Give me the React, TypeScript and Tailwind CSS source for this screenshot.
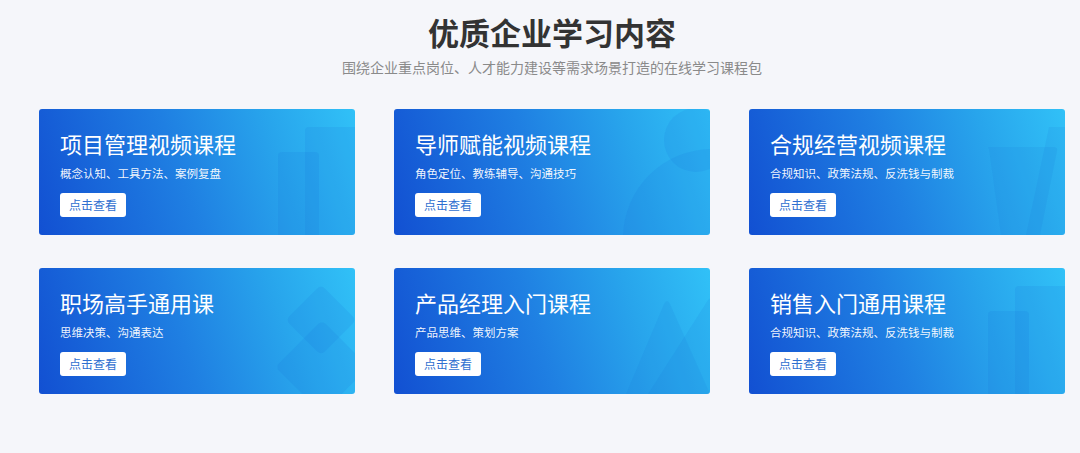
import React from "react";

type Course = {
  title: string;
  desc: string;
  deco: "bars" | "circles" | "slant" | "diamonds" | "peaks";
};

const courses: Course[] = [
  { title: "项目管理视频课程", desc: "概念认知、工具方法、案例复盘", deco: "bars" },
  { title: "导师赋能视频课程", desc: "角色定位、教练辅导、沟通技巧", deco: "circles" },
  { title: "合规经营视频课程", desc: "合规知识、政策法规、反洗钱与制裁", deco: "slant" },
  { title: "职场高手通用课", desc: "思维决策、沟通表达", deco: "diamonds" },
  { title: "产品经理入门课程", desc: "产品思维、策划方案", deco: "peaks" },
  { title: "销售入门通用课程", desc: "合规知识、政策法规、反洗钱与制裁", deco: "bars" },
];

const SHAPE = "#1670d8";

function Deco({ kind }: { kind: Course["deco"] }) {
  return (
    <svg
      className="pointer-events-none absolute inset-0 h-full w-full"
      viewBox="0 0 316 126"
      preserveAspectRatio="none"
    >
      {kind === "bars" && (
        <g fill={SHAPE} fillOpacity="0.13">
          <rect x="266" y="18" width="70" height="130" rx="4" />
          <rect x="239" y="43" width="41" height="100" rx="4" />
        </g>
      )}
      {kind === "circles" && (
        <g fill={SHAPE} fillOpacity="0.13">
          <circle cx="302" cy="31" r="32" />
          <circle cx="318" cy="129" r="89" />
        </g>
      )}
      {kind === "slant" && (
        <g fill={SHAPE} fillOpacity="0.12">
          <path d="M300 18 L330 18 L330 126 L277 126 Z" />
          <path d="M240 40 Q237 38 242 38 L305 38 Q309 38 308 42 L291 126 L252 126 Z" />
        </g>
      )}
      {kind === "diamonds" && (
        <g fill={SHAPE} fillOpacity="0.13">
          <rect x="257" y="27" width="50" height="50" rx="5" transform="rotate(45 282 52)" />
          <rect x="250" y="66" width="66" height="66" rx="5" transform="rotate(45 283 99)" />
        </g>
      )}
      {kind === "peaks" && (
        <g fill={SHAPE} fillOpacity="0.12">
          <path d="M232 126 L270 36 Q273 30 276 36 L316 126 Z" />
          <path d="M254 126 L314 32 Q318 28 320 34 L320 126 Z" />
        </g>
      )}
    </svg>
  );
}

function CourseCard({ course }: { course: Course }) {
  return (
    <div className="relative h-[126px] overflow-hidden rounded-[3px] bg-[linear-gradient(72deg,#1250d2_0%,#1f7fe2_45%,#28a5ec_75%,#31c1f7_100%)] pl-[21px] pt-[20px]">
      <Deco kind={course.deco} />
      <div className="relative">
        <h3 className="text-[22px] leading-[28px] font-normal text-white">
          {course.title}
        </h3>
        <p className="mt-[8px] text-[11.5px] leading-[16px] text-white/95">
          {course.desc}
        </p>
        <button className="mt-[12px] flex h-[24px] w-[66px] items-center justify-center rounded-[3px] bg-white text-[12px] text-[#2f6fd0]">
          点击查看
        </button>
      </div>
    </div>
  );
}

export default function App() {
  return (
    <div
      className="min-h-[453px] w-full bg-[#f5f6fa]"
      style={{ fontFamily: '"Noto Sans CJK SC", "Noto Sans", sans-serif' }}
    >
      <div className="w-[1104px] pt-[12px]">
        <h2 className="text-center text-[31px] leading-[40px] font-bold text-[#333333]">
          优质企业学习内容
        </h2>
        <p className="mt-[5px] text-center text-[14px] leading-[20px] text-[#8a8a8a]">
          围绕企业重点岗位、人才能力建设等需求场景打造的在线学习课程包
        </p>
      </div>
      <div className="ml-[39px] mt-[32px] grid w-[1026px] grid-cols-3 gap-x-[39px] gap-y-[33px]">
        {courses.map((c) => (
          <CourseCard key={c.title} course={c} />
        ))}
      </div>
    </div>
  );
}
